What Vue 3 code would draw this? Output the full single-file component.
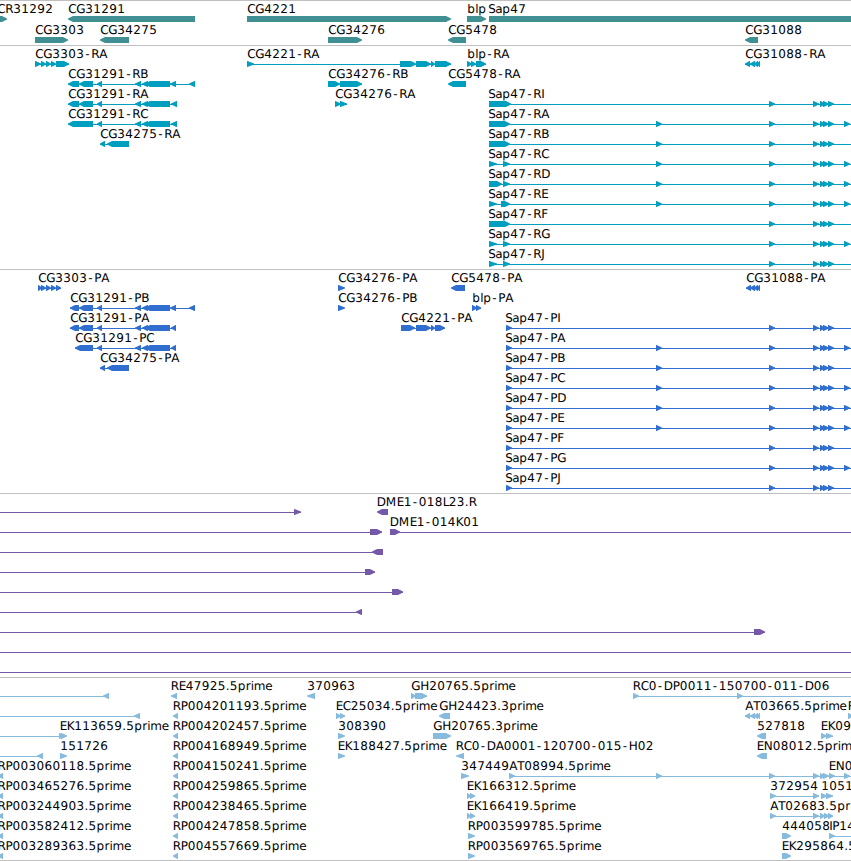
<script setup>
// Feature: [label, start, direction, segments, lineStart?, lineEnd?]
// Coordinates are genome-view pixels; a feature may run past either edge.
const EDGE_L = -10
const EDGE_R = 870

const tail = [[769, 775], [813, 819], [820, 825], [823, 829], [828, 834]]
const mid = [[656, 662]]
const last = [[844, 850]]
const core = [[97, 102], [135, 141], [142, 148], [145, 170]]

const sapStarts = {
  I: [[489, 511]], A: [[489, 510]], B: [[489, 510]],
  C: [[489, 497], [503, 510]], D: [[489, 502], [503, 510]], E: [[489, 497], [501, 510]],
  F: [[489, 510]], G: [[489, 497], [503, 510]], J: [[489, 497], [503, 510]],
}
const sap = (kind, letter) => {
  const head = kind === 'R' ? sapStarts[letter] : [[506, 512]]
  const segs = [
    ...head,
    ...('ABCDE'.includes(letter) ? mid : []),
    ...tail,
    ...('ACDEG'.includes(letter) ? last : []),
  ]
  return [`Sap47-${kind}${letter}`, kind === 'R' ? 488 : 505, 'r', segs, null, EDGE_R]
}
const rp = (id) => [`RP00${id}.5prime`, 172.6, 'l', [[173, 178]]]
const rpLeft = (id) => [`RP00${id}.5prime`, -2.6, 'l', [[-3, 3]]]

const tracks = [
  {
    name: 'genes', height: 44, pitch: 21,
    rows: [
      [
        ['CR31292', -3, 'r', [[-10, 7]]],
        ['CG31291', 68, 'l', [[68, 195]]],
        ['CG4221', 247, 'r', [[247, 451]]],
        ['blp', 467, 'r', [[467, 486]]],
        ['Sap47', 488, 'r', [[489, 870]]],
      ],
      [
        ['CG3303', 35, 'r', [[35, 68]]],
        ['CG34275', 100, 'l', [[100, 129]]],
        ['CG34276', 328, 'r', [[328, 362]]],
        ['CG5478', 448, 'l', [[448, 466]]],
        ['CG31088', 745, 'l', [[745, 758]]],
      ],
    ],
  },
  {
    name: 'transcripts', height: 223, pitch: 20,
    rows: [
      [
        ['CG3303-RA', 35, 'r', [[35, 41], [41, 46], [46, 51], [51, 56], [56, 69]]],
        ['CG4221-RA', 247, 'r', [[247, 254], [400, 416], [416, 431], [431, 435], [435, 451]]],
        ['blp-RA', 467, 'r', [[467, 472], [471, 476], [476, 486]]],
        ['CG31088-RA', 745, 'l', [[745, 750], [750, 755], [754, 758], [757, 760]]],
      ],
      [
        ['CG31291-RB', 68, 'l', [[68, 79], [79, 93], ...core, [170, 176], [189, 195]]],
        ['CG34276-RB', 328, 'r', [[328, 340], [340, 362]]],
        ['CG5478-RA', 448, 'l', [[448, 466]]],
      ],
      [
        ['CG31291-RA', 68, 'l', [[68, 79], [79, 93], ...core, [171, 177]]],
        ['CG34276-RA', 335, 'r', [[335, 341], [340, 347]]],
        sap('R', 'I'),
      ],
      [
        ['CG31291-RC', 68, 'l', [[68, 93], ...core, [171, 177]]],
        sap('R', 'A'),
      ],
      [
        ['CG34275-RA', 100, 'l', [[100, 105], [107, 129]]],
        sap('R', 'B'),
      ],
      ...['C', 'D', 'E', 'F', 'G', 'J'].map((l) => [sap('R', l)]),
    ],
  },
  {
    name: 'proteins', height: 223, pitch: 20,
    rows: [
      [
        ['CG3303-PA', 38, 'r', [[38, 42], [41, 46], [46, 51], [51, 56], [56, 61]]],
        ['CG34276-PA', 338, 'r', [[338, 345]]],
        ['CG5478-PA', 451, 'l', [[451, 465]]],
        ['CG31088-PA', 746, 'l', [[746, 751], [750, 755], [754, 758], [757, 760]]],
      ],
      [
        ['CG31291-PB', 70, 'l', [[70, 79], [79, 93], ...core, [170, 176], [189, 195]]],
        ['CG34276-PB', 338, 'r', [[338, 345]]],
        ['blp-PA', 472, 'r', [[472, 477], [476, 481]]],
      ],
      [
        ['CG31291-PA', 70, 'l', [[70, 79], [79, 93], ...core, [171, 176]]],
        ['CG4221-PA', 401, 'r', [[401, 415], [416, 431], [431, 435], [435, 445]]],
        sap('P', 'I'),
      ],
      [
        ['CG31291-PC', 75, 'l', [[75, 93], ...core, [171, 176]]],
        sap('P', 'A'),
      ],
      [
        ['CG34275-PA', 100, 'l', [[100, 105], [107, 129]]],
        sap('P', 'B'),
      ],
      ...['C', 'D', 'E', 'F', 'G', 'J'].map((l) => [sap('P', l)]),
    ],
  },
  {
    name: 'bacs', height: 183, pitch: 20,
    rows: [
      [['', 0, 'r', [[294, 301]], EDGE_L], ['DME1-018L23.R', 376.5, 'l', [[377, 388]]]],
      [['', 0, 'r', [[370, 382]], EDGE_L], ['DME1-014K01', 389.5, 'r', [[390, 400]], null, EDGE_R]],
      [['', 0, 'l', [[372, 383]], EDGE_L]],
      [['', 0, 'r', [[365, 375]], EDGE_L]],
      [['', 0, 'r', [[392, 403]], EDGE_L]],
      [['', 0, 'l', [[356, 362]], EDGE_L]],
      [['', 0, 'r', [[754, 765]], EDGE_L]],
      [['', 0, 'r', [], EDGE_L, EDGE_R]],
      [['', 0, 'r', [], EDGE_L, EDGE_R]],
    ],
  },
  {
    name: 'ests', height: 182, pitch: 20,
    rows: [
      [
        ['', 0, 'l', [[103, 109]], EDGE_L],
        ['RE47925.5prime', 170.6, 'l', [[171, 177]]],
        ['370963', 307, 'l', [[307, 315]]],
        ['GH20765.5prime', 411, 'r', [[411, 416], [415, 427]]],
        ['RC0-DP0011-150700-011-D06', 632.6, 'r', [[633, 639], [737, 743]], null, EDGE_R],
      ],
      [
        ['', 0, 'l', [[134, 140]], EDGE_L],
        rp('4201193'),
        ['EC25034.5prime', 335.6, 'r', [[336, 341], [340, 345]]],
        ['GH24423.3prime', 439, 'l', [[439, 450]]],
        ['AT03665.5prime', 745, 'l', [[745, 750], [750, 755], [754, 758], [757, 760]]],
        ['R', 847.5, 'r', [[848, 854]]],
      ],
      [
        ['', 0, 'r', [[59, 65]], EDGE_L],
        ['EK113659.5prime', 59.6, 'r', [[61, 67]]],
        rp('4202457'),
        ['308390', 338, 'r', [[338, 345]]],
        ['GH20765.3prime', 433, 'r', [[433, 451]]],
        ['527818', 757, 'l', [[757, 766]]],
        ['EK09', 820.6, 'r', [[821, 827], [826, 833]]],
      ],
      [
        ['', 0, 'l', [[37, 43]], EDGE_L],
        ['151726', 60, 'r', [[60, 67]]],
        rp('4168949'),
        ['EK188427.5prime', 337.6, 'r', [[338, 345]]],
        ['RC0-DA0001-120700-015-H02', 455.6, 'l', [[456, 464]]],
        ['EN08012.5prime', 756.6, 'l', [[757, 767]]],
      ],
      [
        rpLeft('3060118'), rp('4150241'),
        ['347449', 461, 'r', [[461, 469]]],
        ['AT08994.5prime', 509, 'r', [[509, 515], ...mid, [769, 775], [813, 819], [820, 825], [823, 829], [829, 835], ...last], null, EDGE_R],
        ['EN0', 828.6, 'r', []],
      ],
      [
        rpLeft('3465276'), rp('4259865'),
        ['EK166312.5prime', 466.6, 'r', [[467, 471], [470, 475]]],
        ['372954', 770, 'r', [[770, 776], [813, 819]]],
        ['1051', 821, 'r', [[821, 827], [826, 833]]],
      ],
      [
        rpLeft('3244903'), rp('4238465'),
        ['EK166419.5prime', 466.6, 'r', [[467, 471], [470, 475]]],
        ['AT02683.5prime', 770, 'r', [[770, 776], [813, 819], [820, 825], [824, 829], [828, 833]]],
      ],
      [
        rpLeft('3582412'), rp('4247858'),
        ['RP003599785.5prime', 467.6, 'r', [[468, 475]]],
        ['444058', 782, 'r', [[782, 791]]],
        ['IP14', 829, 'r', [[829, 835]], null, EDGE_R],
      ],
      [
        rpLeft('3289363'), rp('4557669'),
        ['RP003569765.5prime', 467.6, 'r', [[468, 475]]],
        ['EK295864.5prime', 781.6, 'r', [[782, 791]]],
      ],
    ],
  },
]

const advances = {
  C: 8, G: 9, R: 8, A: 8, B: 7, D: 9, E: 7, F: 7, H: 9, I: 3, J: 4, K: 7.5, L: 6, M: 11, N: 9,
  P: 7, S: 7, T: 7, a: 7, b: 8, e: 7, i: 3, l: 3, m: 11.4, p: 8, r: 5, '-': 7, '.': 4,
}
const glyphXs = (text, x) => {
  const xs = []
  let pen = x + 0.2
  for (const ch of text) {
    xs.push((ch === '-' ? pen + 1 : pen).toFixed(1))
    pen += advances[ch] ?? 8
  }
  return xs.join(' ')
}

// A bar whose leading end narrows to a point; short ones are plain triangles.
const arrow = ([a, b], dir, y) => {
  const tip = b - a > 8 ? 5 : b - a - 0.5
  const shoulder = dir === 'r' ? b - tip : a + tip
  const [back, point] = dir === 'r' ? [a, b] : [b, a]
  return `${back},${y} ${shoulder},${y} ${point},${y + 2.5} ${point},${y + 3.5} ${shoulder},${y + 6} ${back},${y + 6}`
}

const drawn = tracks.map((t) => ({
  ...t,
  features: t.rows.flatMap((row, i) =>
    row.map(([label, x, dir, segs, from, to]) => {
      const top = i * t.pitch
      const start = from ?? (segs.length ? segs[0][0] : 0)
      const end = to ?? (segs.length ? segs[segs.length - 1][1] : 0)
      const spliced = from != null || to != null || segs.length > 1
      return {
        label,
        xs: glyphXs(label, x),
        baseline: top + 12,
        line: spliced ? { x: start, y: top + 18, w: end - start } : null,
        arrows: segs.map((s) => arrow(s, dir, top + 15)),
      }
    }),
  ),
}))
</script>

<template>
  <main class="browser">
    <section v-for="t in drawn" :key="t.name" class="track" :class="t.name">
      <svg class="canvas" width="851" :height="t.height" :viewBox="`0 0 851 ${t.height}`">
        <g v-for="(f, i) in t.features" :key="i">
          <rect v-if="f.line" class="glyph" :x="f.line.x" :y="f.line.y" :width="f.line.w" height="1" />
          <polygon v-for="(p, j) in f.arrows" :key="j" class="tip" :points="p" />
          <text v-if="f.label" class="label" :x="f.xs" :y="f.baseline">{{ f.label }}</text>
        </g>
      </svg>
    </section>
  </main>
</template>

<style>
body {
  background: #fff;
}
</style>

<style scoped>
.browser {
  display: flex;
  flex-direction: column;
  width: 851px;
  height: 861px;
  box-sizing: border-box;
  overflow: hidden;
  background: #fff;
  border-bottom: 1px solid #c0c0c0;
}
.track {
  border-top: 1px solid #c0c0c0;
}
.canvas {
  display: block;
  overflow: hidden;
}
.glyph,
.tip {
  fill: currentColor;
}
.glyph {
  shape-rendering: crispEdges;
}
.label {
  font-family: "DejaVu Sans", sans-serif;
  font-size: 12px;
  fill: #000;
  text-rendering: geometricPrecision;
}
.genes { color: #408f93; }
.transcripts { color: #009fbf; }
.proteins { color: #306fcf; }
.bacs { color: #7459a8; }
.ests { color: #87bbdd; }
</style>
